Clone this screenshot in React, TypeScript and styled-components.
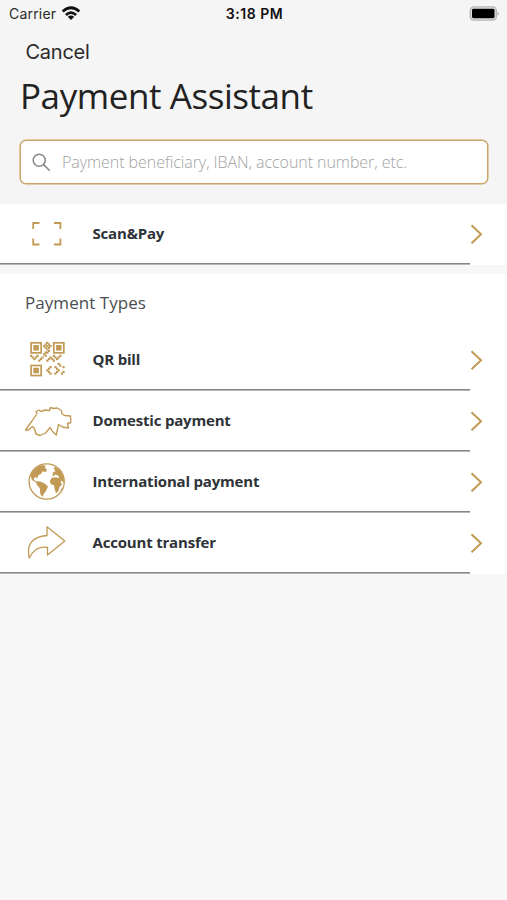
import React from "react";
import styled, { createGlobalStyle } from "styled-components";

const GOLD = "#c19a55";

const GlobalStyle = createGlobalStyle`
  * { box-sizing: border-box; }
  body { margin: 0; background: #f7f7f7; }
`;

const Screen = styled.main`
  width: 507px;
  min-height: 900px;
  background: #f7f7f7;
  font-family: "Open Sans", sans-serif;
  color: #2e3338;
`;

const Header = styled.header`
  height: 204px;
  background: #f5f5f5;
`;

const StatusBar = styled.div`
  display: grid;
  grid-template-columns: 1fr auto 1fr;
  align-items: center;
  height: 26px;
  padding: 0 7px 0 9px;
  font-family: Inter, sans-serif;
  color: #111;
`;

const Carrier = styled.div`
  display: flex;
  align-items: center;
  gap: 5px;
  font-size: 14px;
  letter-spacing: 0.2px;
  color: #2b2b2b;
`;

const Clock = styled.div`
  font-size: 14px;
  font-weight: 600;
  letter-spacing: 0.55px;
`;

const Battery = styled.svg`
  justify-self: end;
`;

const Cancel = styled.button`
  display: block;
  margin: 12px 0 0 25.5px;
  padding: 0;
  border: 0;
  background: none;
  font: 400 20px/28px Inter, sans-serif;
  letter-spacing: -0.25px;
  color: #2b2b2b;
`;

const Title = styled.h1`
  margin: 6px 0 0 20px;
  font-size: 35px;
  line-height: 48px;
  font-weight: 400;
  letter-spacing: -0.43px;
  color: #222;
  white-space: nowrap;
`;

const SearchBox = styled.label`
  display: flex;
  align-items: center;
  gap: 11px;
  height: 44px;
  margin: 20px 19px 0 20px;
  padding: 0 11px;
  border: 1px solid #c9a466;
  border-radius: 6px;
  box-shadow: 0 0 0 0.5px #c9a466;
  background: #fff;
`;

const SearchInput = styled.input`
  flex: 1;
  min-width: 0;
  padding: 0;
  border: 0;
  outline: 0;
  background: none;
  font: 300 16px/24px "Open Sans", sans-serif;
  letter-spacing: -0.06px;
  &::placeholder { color: #a2a2a2; opacity: 1; }
`;

const Section = styled.section<{ $gap?: boolean }>`
  margin-top: ${(p) => (p.$gap ? 9 : 0)}px;
  background: #fff;
`;

const SectionTitle = styled.h2`
  height: 56px;
  margin: 0;
  padding: 16px 0 0 25px;
  font-size: 17px;
  line-height: 26px;
  font-weight: 400;
  letter-spacing: 0.05px;
  color: #4a4d51;
`;

const Row = styled.div`
  display: flex;
  align-items: center;
  height: 61px;
  padding: 0 24px 1px 20px;
  background: linear-gradient(#858585, #858585) left bottom / 470px 1.6px no-repeat;
`;

const RowIcon = styled.svg`
  flex: none;
  width: 60px;
  height: 50px;
`;

const RowLabel = styled.span`
  flex: 1;
  margin-left: 12.5px;
  padding-bottom: 2px;
  font-size: 15px;
  line-height: 24px;
  font-weight: 700;
  letter-spacing: -0.19px;
`;

const WifiIcon = () => (
  <svg width="20" height="15" viewBox="0 0 20 15" fill="none" stroke="#111" strokeWidth="2.7">
    <path d="M1.7 5.5Q10-2 18.3 5.5" />
    <path d="M4.9 8.9Q10 4.4 15.1 8.9" />
    <path d="M6.8 10.8Q10 8.3 13.2 10.8L10 14Z" fill="#111" stroke="none" />
  </svg>
);

const BatteryIcon = () => (
  <Battery width="31" height="15" viewBox="0 0 31 15">
    <rect x="1.3" y="0.9" width="26" height="13.2" rx="3.6" fill="#e2e2e2" stroke="#b5b5b5" strokeWidth="1.4" />
    <rect x="3" y="2.8" width="22.5" height="9.4" rx="1.4" fill="#000" />
    <path d="M28.6 5.2Q31 7.5 28.6 9.8Z" fill="#aaa" />
  </Battery>
);

const SearchIcon = () => (
  <svg width="19" height="19" viewBox="0 0 19 19" fill="none" stroke="#85878a" strokeWidth="1.5">
    <circle cx="7.2" cy="7.2" r="6" />
    <path d="M11.6 11.6L17.8 17.8" />
  </svg>
);

const Chevron = () => (
  <svg width="13" height="21" viewBox="0 0 13 21" fill="none" stroke={GOLD} strokeWidth="2">
    <path d="M1.5 1.2L11 10.2L1.5 19.2" />
  </svg>
);

const ScanIcon = () => (
  <RowIcon viewBox="0 0 60 50" fill="none" stroke={GOLD} strokeWidth="1.8">
    <path d="M19.5 14H13.2V20M34 14H40.4V20M19.5 35.5H13.2V29.5M34 35.5H40.4V29.5" />
  </RowIcon>
);

const FINDERS = [[0, 0], [14, 0], [0, 14]];
const MODULES = [
  [10, 0], [9, 1], [11, 1], [8, 2], [10, 2], [12, 2], [9, 3], [11, 3], [10, 4], [11, 5], [9, 6], [10, 6],
  [8, 7], [9, 8], [7, 9], [6, 10], [5, 11], [0, 8], [1, 9], [2, 10], [3, 9], [4, 8],
  [14, 8], [15, 9], [16, 10], [17, 9], [18, 8], [12, 9], [11, 10], [13, 10], [10, 11], [14, 11],
  [12, 15], [11, 16], [10, 17], [11, 18], [12, 19],
  [15, 15], [16, 16], [17, 17], [16, 18], [15, 19],
  [17, 13], [18, 14], [20, 15], [19, 19], [20, 18],
];

const QrIcon = () => (
  <RowIcon viewBox="0 0 60 50">
    <g transform="translate(10.3 7) scale(1.62)" fill={GOLD}>
      {FINDERS.map(([x, y]) => (
        <g key={`${x}-${y}`} transform={`translate(${x} ${y})`}>
          <rect x="0.5" y="0.5" width="6.2" height="6.2" fill="none" stroke={GOLD} strokeWidth="1.05" />
          <rect x="1.9" y="1.9" width="3.4" height="3.4" />
        </g>
      ))}
      {MODULES.map(([x, y]) => (
        <rect key={`${x}-${y}`} x={x - 0.15} y={y - 0.15} width="1.35" height="1.35" />
      ))}
    </g>
  </RowIcon>
);

const SwissIcon = () => (
  <RowIcon viewBox="0 0 60 50" fill="none" stroke={GOLD} strokeWidth="1.35" strokeLinejoin="round">
    <path d="M5.5 34L8 30.5L12 25L15 20.5L17 17.5L16 15.5L19 14L21 15.5L25 14L29.5 14.5L30.5 11.5L33.5 12.5L37 12L41.5 14.5L42 18L44.5 19.5L50.5 20L50.8 26.5L47.5 27.5L48.5 32L42.5 31L38.5 28.5L37.5 33L36.2 39L32.5 35.5L30.2 31.5L25.5 37L20 39.5L16 38L14.5 32.5L12.5 30.5L8.5 34Z" />
  </RowIcon>
);

const GlobeIcon = () => (
  <RowIcon viewBox="0 0 60 50" fill={GOLD}>
    <circle cx="26.7" cy="24.5" r="17.6" fill="none" stroke={GOLD} strokeWidth="1.3" />
    <path d="M12 15.5Q16 9.5 22 8L26 9L24.5 11L27 12L26 15L22.5 14.5L21 17L18.5 18L17.5 21L15 20L13.5 22.5L16 24.5L19 24.2L24 26L28 29.5L26 34L24 36.5L22.5 40L20.3 37L20 31.5L17 28L16 25.5L12 23L10.5 19Z" />
    <path d="M32.5 19L33 15.5L35.5 14L33.5 11L35.5 10L40.5 14L43.8 20.5L44 26L41.5 23.5L40.5 25L42 27.5L39.5 30L38.5 34L36 36.5L34.5 31.5L34 28L31 27.5L29.8 24L32 20.5L36 20.5L39.5 21L38 18.5L35 17.5L34 19Z" />
    <path d="M41 32L42 30L41.5 34L40.5 35Z" />
  </RowIcon>
);

const TransferIcon = () => (
  <RowIcon viewBox="0 0 60 50" fill="none" stroke={GOLD} strokeWidth="1.3" strokeLinejoin="round">
    <path d="M27 8.8L44.8 23L27.5 37V29.5Q15.5 27 9.3 40Q4.5 19.5 27 17.5Z" />
  </RowIcon>
);

const PAYMENT_TYPES = [
  { label: "QR bill", Icon: QrIcon },
  { label: "Domestic payment", Icon: SwissIcon },
  { label: "International payment", Icon: GlobeIcon },
  { label: "Account transfer", Icon: TransferIcon },
];

const PaymentRow = ({ label, Icon }: { label: string; Icon: React.ComponentType }) => (
  <Row>
    <Icon />
    <RowLabel>{label}</RowLabel>
    <Chevron />
  </Row>
);

export default function App() {
  return (
    <>
      <GlobalStyle />
      <Screen>
        <Header>
          <StatusBar>
            <Carrier>Carrier <WifiIcon /></Carrier>
            <Clock>3:18 PM</Clock>
            <BatteryIcon />
          </StatusBar>
          <Cancel>Cancel</Cancel>
          <Title>Payment Assistant</Title>
          <SearchBox>
            <SearchIcon />
            <SearchInput placeholder="Payment beneficiary, IBAN, account number, etc." />
          </SearchBox>
        </Header>
        <Section>
          <PaymentRow label="Scan&Pay" Icon={ScanIcon} />
        </Section>
        <Section $gap>
          <SectionTitle>Payment Types</SectionTitle>
          {PAYMENT_TYPES.map((type) => (
            <PaymentRow key={type.label} {...type} />
          ))}
        </Section>
      </Screen>
    </>
  );
}
